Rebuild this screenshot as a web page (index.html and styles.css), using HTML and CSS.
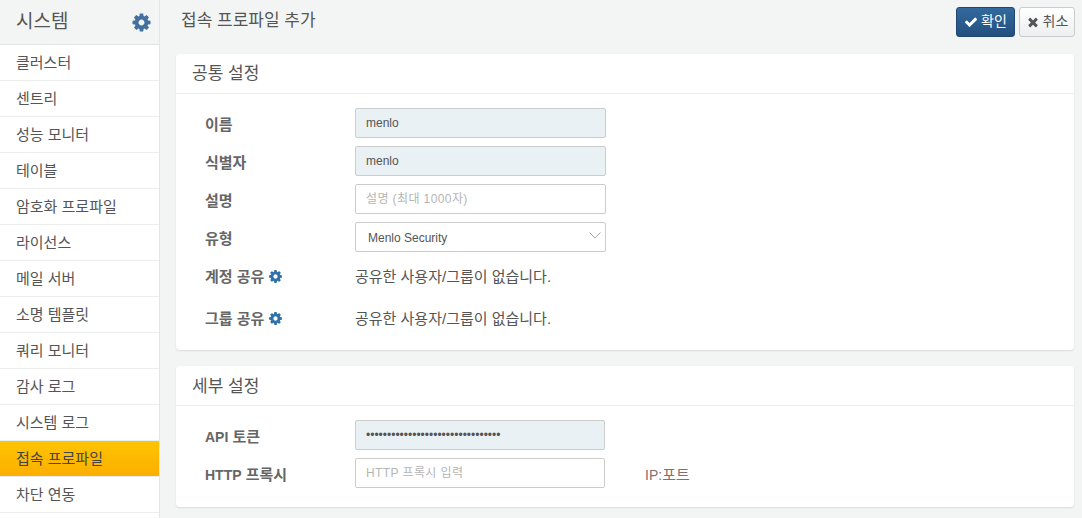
FILE: index.html
```html
<!DOCTYPE html>
<html lang="ko">
<head>
    <meta charset="UTF-8">
    <title>접속 프로파일 추가</title>
    <link rel="stylesheet" href="styles.css">
</head>
<body>
    <svg class="icon-defs" width="0" height="0">
        <symbol id="cog" viewBox="0 0 1792 1792"><path d="M1152 896q0-106-75-181t-181-75-181 75-75 181 75 181 181 75 181-75 75-181zm512-109v222q0 12-8 23t-20 13l-185 28q-19 54-39 91 35 50 107 138 10 12 10 25t-9 23q-27 37-99 108t-94 71q-12 0-26-9l-138-108q-44 23-91 38-16 136-29 186-7 28-36 28h-222q-14 0-24.5-8.5t-11.5-21.5l-28-184q-49-16-90-37l-141 107q-10 9-25 9-14 0-25-11-126-114-165-168-7-10-7-23 0-12 8-23 15-21 51-66.5t54-70.5q-27-50-41-99l-183-27q-13-2-21-12.5t-8-23.5v-222q0-12 8-23t19-13l186-28q14-46 39-92-40-57-107-138-10-12-10-24 0-10 9-23 26-36 98.5-107.5t94.5-71.5q13 0 26 10l138 107q44-23 91-38 16-136 29-186 7-28 36-28h222q14 0 24.5 8.5t11.5 21.5l28 184q49 16 90 37l142-107q9-9 24-9 13 0 25 10 129 119 165 170 7 8 7 22 0 12-8 23-15 21-51 66.5t-54 70.5q26 50 41 98l183 28q13 2 21 12.5t8 23.5z"/></symbol>
    </svg>

    <div class="layout">
        <aside class="sidebar">
            <div class="sidebar-head">
                <span class="sidebar-title">시스템</span>
                <svg class="head-cog"><use href="#cog"/></svg>
            </div>
            <ul class="menu">
                <li>클러스터</li>
                <li>센트리</li>
                <li>성능 모니터</li>
                <li>테이블</li>
                <li>암호화 프로파일</li>
                <li>라이선스</li>
                <li>메일 서버</li>
                <li>소명 템플릿</li>
                <li>쿼리 모니터</li>
                <li>감사 로그</li>
                <li>시스템 로그</li>
                <li class="active">접속 프로파일</li>
                <li>차단 연동</li>
            </ul>
        </aside>

        <main class="content">
            <div class="topbar">
                <h1>접속 프로파일 추가</h1>
                <div class="actions">
                    <button class="btn btn-primary">
                        <svg class="btn-icon" viewBox="0 0 1792 1792"><path d="M1671 566q0 40-28 68l-724 724-136 136q-28 28-68 28t-68-28l-136-136-362-362q-28-28-28-68t28-68l136-136q28-28 68-28t68 28l294 295 656-657q28-28 68-28t68 28l136 136q28 28 28 68z"/></svg><span>확인</span>
                    </button>
                    <button class="btn btn-default">
                        <svg class="btn-icon" viewBox="0 0 1792 1792"><path d="M1490 1322q0 40-28 68l-136 136q-28 28-68 28t-68-28l-294-294-294 294q-28 28-68 28t-68-28l-136-136q-28-28-28-68t28-68l294-294-294-294q-28-28-28-68t28-68l136-136q28-28 68-28t68 28l294 294 294-294q28-28 68-28t68 28l136 136q28 28 28 68t-28 68l-294 294 294 294q28 28 28 68z"/></svg><span>취소</span>
                    </button>
                </div>
            </div>

            <section class="card">
                <h2>공통 설정</h2>
                <div class="card-body">
                    <div class="row">
                        <label>이름</label>
                        <input class="field filled" type="text" value="menlo">
                    </div>
                    <div class="row">
                        <label>식별자</label>
                        <input class="field filled" type="text" value="menlo">
                    </div>
                    <div class="row">
                        <label>설명</label>
                        <input class="field" type="text" placeholder="설명 (최대 1000자)">
                    </div>
                    <div class="row">
                        <label>유형</label>
                        <div class="select-wrap">
                            <select class="field select"><option>Menlo Security</option></select>
                            <svg class="chevron" viewBox="0 0 12 7"><path d="M.5.5 6 6l5.5-5.5"/></svg>
                        </div>
                    </div>
                    <div class="row share-row">
                        <label>계정 공유<svg class="label-cog"><use href="#cog"/></svg></label>
                        <span>공유한 사용자/그룹이 없습니다.</span>
                    </div>
                    <div class="row share-row">
                        <label>그룹 공유<svg class="label-cog"><use href="#cog"/></svg></label>
                        <span>공유한 사용자/그룹이 없습니다.</span>
                    </div>
                </div>
            </section>

            <section class="card">
                <h2 class="detail-title">세부 설정</h2>
                <div class="card-body detail">
                    <div class="row">
                        <label><span><span class="latin">API</span> 토큰</span></label>
                        <input class="field filled wide" type="password" value="abcdefghijklmnopqrstuvwxyz012345">
                    </div>
                    <div class="row">
                        <label><span><span class="latin">HTTP</span> 프록시</span></label>
                        <input class="field wide" type="text" placeholder="HTTP 프록시 입력">
                        <span class="hint"><span class="latin">IP:</span>포트</span>
                    </div>
                </div>
            </section>
        </main>
    </div>
</body>
</html>
```

FILE: styles.css
```css
* {
    box-sizing: border-box;
}
html, body {
    height: 100%;
}
body {
    margin: 0;
    overflow: hidden;
    background: #f3f5f5;
    color: #555;
    font-family: "Liberation Sans", "Noto Sans CJK KR", sans-serif;
    font-size: 15px;
}
.icon-defs {
    position: absolute;
}
.layout {
    display: flex;
    height: 100%;
}
.latin {
    font-size: 14px;
}

/* sidebar */
.sidebar {
    width: 160px;
    flex-shrink: 0;
    background: #fff;
    border-right: 1px solid #e4e6e6;
}
.sidebar-head {
    display: flex;
    align-items: center;
    justify-content: space-between;
    height: 45px;
    padding: 0 7px 0 16px;
    background: #f3f4f4;
    border-bottom: 1px solid #e2e4e4;
}
.sidebar-title {
    font-size: 19px;
    padding-bottom: 6px;
}
.head-cog {
    width: 21px;
    height: 21px;
    fill: #42709f;
}
.menu {
    list-style: none;
    margin: 0;
    padding: 0;
}
.menu li {
    height: 36px;
    line-height: 35px;
    padding-left: 16px;
    border-bottom: 1px solid #eceeee;
}
.menu li.active {
    background: linear-gradient(#fec400, #fbaf00);
    color: #444;
}

/* main */
.content {
    flex: 1;
    padding: 0 8px 0 16px;
}
.topbar {
    display: flex;
    justify-content: space-between;
    height: 54px;
}
.topbar h1 {
    margin: 0;
    padding: 11px 0 0 5px;
    font-size: 17px;
    font-weight: normal;
    line-height: 20px;
}
.actions {
    display: flex;
    gap: 4px;
    padding-top: 7px;
    margin-right: -1px;
}
.btn {
    display: flex;
    align-items: center;
    justify-content: center;
    gap: 3px;
    height: 30px;
    padding: 0;
    border-radius: 3px;
    font-family: inherit;
    font-size: 14px;
}
.btn span {
    padding-bottom: 5px;
}
.btn-icon {
    width: 14px;
    height: 14px;
}
.btn-primary {
    width: 59px;
    background: linear-gradient(#33699e, #234f7f);
    border: 1px solid #1f4770;
    color: #fff;
}
.btn-primary .btn-icon {
    fill: #fff;
}
.btn-default {
    width: 56px;
    background: linear-gradient(#fff, #eceef1);
    border: 1px solid #ccc;
    color: #555;
}
.btn-default .btn-icon {
    fill: #555;
}

/* cards */
.card {
    background: #fff;
    border-radius: 4px;
    box-shadow: 0 1px 2px rgba(0, 0, 0, .1);
    margin-bottom: 16px;
}
.card h2 {
    margin: 0;
    height: 40px;
    padding-left: 16px;
    border-bottom: 1px solid #eceeee;
    font-size: 17px;
    font-weight: normal;
    line-height: 40px;
}
.card h2.detail-title {
    line-height: 41px;
}
.card-body {
    padding: 14px 0 14px 29px;
}
.card-body.detail {
    padding-bottom: 19px;
}
.row {
    display: flex;
    align-items: center;
    height: 30px;
    margin-bottom: 8px;
}
.row:last-child {
    margin-bottom: 0;
}
.row label {
    width: 150px;
    font-weight: bold;
    color: #666;
    display: flex;
    align-items: center;
    gap: 4px;
}
.field {
    width: 251px;
    height: 30px;
    padding: 0 10px;
    background: #fff;
    border: 1px solid #ccc;
    border-radius: 2px;
    color: #555;
    font-family: inherit;
    font-size: 12px;
}
.field::placeholder {
    color: #b5b5b5;
    letter-spacing: .4px;
}
.field.filled {
    background: #e9f1f4;
}
.field.wide {
    width: 250px;
}
.select-wrap {
    position: relative;
}
.select {
    display: block;
    appearance: none;
    padding: 2px 0 0 12px;
}
.chevron {
    position: absolute;
    top: 10px;
    right: 5px;
    width: 12px;
    height: 7px;
    fill: none;
    stroke: #aaa;
}
.label-cog {
    width: 15px;
    height: 15px;
    margin-top: 2px;
    fill: #2f71a9;
}
.share-row {
    height: 34px;
    padding-bottom: 3px;
}
.hint {
    margin-left: 40px;
    color: #8a6d6d;
}
```
